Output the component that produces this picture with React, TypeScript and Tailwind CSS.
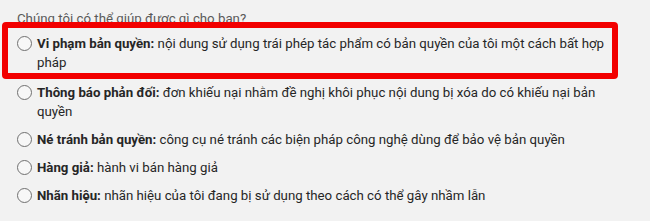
const options = [
  {
    label: "Vi phạm bản quyền:",
    text: "nội dung sử dụng trái phép tác phẩm có bản quyền của tôi một cách bất hợp pháp",
    highlighted: true,
  },
  {
    label: "Thông báo phản đối:",
    text: "đơn khiếu nại nhằm đề nghị khôi phục nội dung bị xóa do có khiếu nại bản quyền",
  },
  {
    label: "Né tránh bản quyền:",
    text: "công cụ né tránh các biện pháp công nghệ dùng để bảo vệ bản quyền",
  },
  { label: "Hàng giả:", text: "hành vi bán hàng giả" },
  {
    label: "Nhãn hiệu:",
    text: "nhãn hiệu của tôi đang bị sử dụng theo cách có thể gây nhầm lẫn",
  },
];

function Radio() {
  return (
    <span className="mt-[2px] flex h-[15px] w-[15px] shrink-0 rounded-full border border-[#707070] bg-[#f7f7f7]" />
  );
}

export default function App() {
  return (
    <div className="h-[221px] w-[650px] overflow-hidden bg-[#f2f2f2] font-['Roboto',sans-serif] text-[13.25px] leading-[19px]">
      <p className="pl-[17px] pt-[9px] text-[#5a5a5a]">Chúng tôi có thể giúp được gì cho bạn?</p>
      <div className="mt-[6px] flex flex-col gap-[9px] pl-[17px]">
        {options.map((o) => (
          <div key={o.label} className={`relative flex gap-[5px] ${o.highlighted ? "mb-[2px]" : ""}`}>
            <Radio />
            <p className="w-[584px] text-[#262626]">
              <span className="font-bold">{o.label}</span> {o.text}
            </p>
            {o.highlighted ? (
              <div className="absolute -top-[12px] -bottom-[7px] left-[-15px] w-[616px] rounded-[4px] border-[6px] border-[#f20000]" />
            ) : null}
          </div>
        ))}
      </div>
    </div>
  );
}
